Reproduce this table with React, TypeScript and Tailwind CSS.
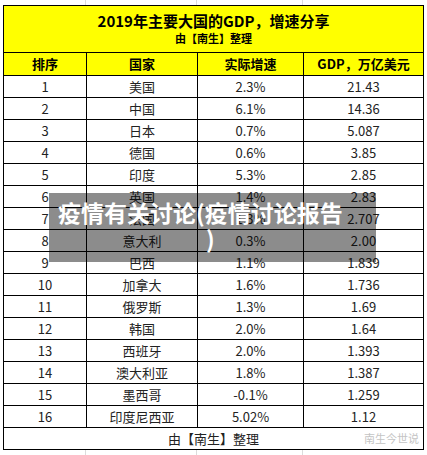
import React from "react";

const rows: [string, string, string, string][] = [
  ["1", "美国", "2.3%", "21.43"],
  ["2", "中国", "6.1%", "14.36"],
  ["3", "日本", "0.7%", "5.087"],
  ["4", "德国", "0.6%", "3.85"],
  ["5", "印度", "5.3%", "2.85"],
  ["6", "英国", "1.4%", "2.83"],
  ["7", "法国", "1.3%", "2.707"],
  ["8", "意大利", "0.3%", "2.00"],
  ["9", "巴西", "1.1%", "1.839"],
  ["10", "加拿大", "1.6%", "1.736"],
  ["11", "俄罗斯", "1.3%", "1.69"],
  ["12", "韩国", "2.0%", "1.64"],
  ["13", "西班牙", "2.0%", "1.393"],
  ["14", "澳大利亚", "1.8%", "1.387"],
  ["15", "墨西哥", "-0.1%", "1.259"],
  ["16", "印度尼西亚", "5.02%", "1.12"],
];

const headers = ["排序", "国家", "实际增速", "GDP，万亿美元"];

// faint spreadsheet gridlines that show outside the table
const GridStrip = ({ h }: { h: string }) => (
  <div className={`flex ${h}`}>
    <div className="w-[86px] border-r border-[#dcdcdc]" />
    <div className="w-[111px] border-r border-[#dcdcdc]" />
    <div className="w-[106px] border-r border-[#dcdcdc]" />
    <div className="flex-1" />
  </div>
);

export default function App() {
  return (
    <div
      className="relative w-[427px] h-[455px] bg-white overflow-hidden"
      style={{ fontFamily: '"Noto Sans CJK SC", "Noto Sans", sans-serif' }}
    >
      <GridStrip h="h-[5px]" />
      <div className="ml-[3px] w-[421px] border border-black">
        <div className="bg-[#ffff00] h-[47px] border-b border-black flex flex-col items-center justify-center gap-[1px] text-black font-bold">
          <div className="text-[15px] leading-[18px]">2019年主要大国的GDP，增速分享</div>
          <div className="text-[11px] leading-[15px]">由【南生】整理</div>
        </div>
        <div className="grid grid-cols-[83px_111px_106px_119px] bg-[#ffff00] h-[23px] border-b border-black">
          {headers.map((t, i) => (
            <div
              key={t}
              className={`flex items-center justify-center text-[13px] font-bold text-black ${i < 3 ? "border-r border-black" : ""}`}
            >
              {t}
            </div>
          ))}
        </div>
        {rows.map((r) => (
          <div
            key={r[0]}
            className="grid grid-cols-[83px_111px_106px_119px] h-[22px] border-b border-black"
          >
            {r.map((c, i) => (
              <div
                key={i}
                className={`flex items-center justify-center text-[13px] text-[#222] ${i < 3 ? "border-r border-black" : ""}`}
              >
                {c}
              </div>
            ))}
          </div>
        ))}
        <div className="relative h-[21px] flex items-center justify-center text-[13px] text-[#222]">
          由【南生】整理
          <span className="absolute right-[4px] top-[3px] text-[11px] leading-[14px] text-[#c4c4c4]">
            南生今世说
          </span>
        </div>
      </div>
      <GridStrip h="h-[6px]" />

      <div className="absolute left-[49px] top-[193px] w-[327px] h-[69px] bg-black/45 pl-[9px] pt-[6px]">
        <div className="text-white font-bold text-[23px] leading-[26px]">
          疫情有关讨论(疫情讨论报告
          <br />
          <span className="pl-[148px]">)</span>
        </div>
      </div>
    </div>
  );
}
